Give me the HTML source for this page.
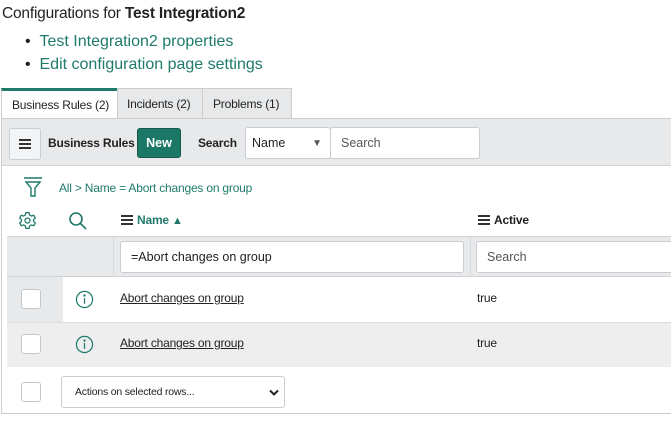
<!DOCTYPE html>
<html><head><style>
*{box-sizing:border-box;margin:0;padding:0}
body{width:671px;height:426px;overflow:hidden;background:#fff;font-family:"Liberation Sans",sans-serif;color:#222;position:relative}
.a{position:absolute;white-space:nowrap}
.t{color:#1f7a6b}
.s{font-size:12px;letter-spacing:-0.2px}
.inp{position:absolute;background:#fff;border:1px solid #c9cdd1;border-radius:3px;font-size:12.5px;padding-left:10px;display:flex;align-items:center}
.cb{position:absolute;width:20px;height:20px;border:1px solid #c4c7ca;border-radius:3px;background:#fff}
.ham{display:inline-block;width:12px;height:10px;border-top:2px solid #333;border-bottom:2px solid #333;position:relative;vertical-align:-1px;margin-right:4px}
.ham:after{content:"";position:absolute;left:0;right:0;top:2px;border-top:2px solid #333}
</style></head><body>
<div class="a" style="left:2px;top:5px;font-size:15.5px;letter-spacing:-0.2px">Configurations for <b style="font-weight:600">Test Integration2</b></div>
<div class="a" style="left:25px;top:33px;font-size:16px"><span style="color:#222">•</span>&nbsp;&nbsp;<span class="t">Test Integration2 properties</span></div>
<div class="a" style="left:25px;top:56px;font-size:16px"><span style="color:#222">•</span>&nbsp;&nbsp;<span class="t">Edit configuration page settings</span></div>

<div class="a s" style="left:1px;top:88px;width:116px;height:31px;background:#fff;border-top:3px solid #1f7a6b;border-left:1px solid #ccc;padding:7px 0 0 10px">Business Rules (2)</div>
<div class="a s" style="left:117px;top:88px;width:86px;height:30px;background:#e6e8ea;border:1px solid #ccc;border-bottom:none;padding:8px 0 0 9px">Incidents (2)</div>
<div class="a s" style="left:203px;top:88px;width:89px;height:30px;background:#e6e8ea;border:1px solid #ccc;border-bottom:none;border-left:none;padding:8px 0 0 10px">Problems (1)</div>

<div class="a" style="left:1px;top:118px;width:680px;height:296px;border:1px solid #ccc"></div>
<div class="a" style="left:2px;top:119px;width:680px;height:47px;background:#e7e9eb;border-bottom:1px solid #d0d3d6"></div>
<div class="a" style="left:9px;top:128px;width:32px;height:32px;background:#f3f4f5;border:1px solid #c9cdd1;border-radius:3px"><span class="ham" style="position:absolute;left:9px;top:10px;margin:0"></span></div>
<div class="a s" style="left:48px;top:136px;font-weight:600">Business Rules</div>
<div class="a" style="left:137px;top:128px;width:44px;height:30px;background:#1b7866;border:1px solid #11594b;border-radius:3px;color:#fff;font-size:12.5px;font-weight:bold;text-align:center;line-height:28px">New</div>
<div class="a s" style="left:198px;top:136px;font-weight:600">Search</div>
<div class="inp" style="left:245px;top:127px;width:86px;height:32px;padding-left:6px">Name<span style="position:absolute;right:8px;font-size:10px;color:#555">▼</span></div>
<div class="inp" style="left:330px;top:127px;width:150px;height:32px;color:#555">Search</div>

<svg class="a" style="left:22px;top:176px" width="22" height="24" viewBox="0 0 22 24" fill="none" stroke="#1f7a6b" stroke-width="1.4"><path d="M2 2h18M4 6h14l-5 6v8h-4v-8z"/></svg>
<div class="a t s" style="left:59px;top:181px">All &gt; Name = Abort changes on group</div>

<svg class="a" style="left:18px;top:211px" width="19" height="19" viewBox="0 0 24 24" fill="none" stroke="#1f7a6b" stroke-width="1.6"><circle cx="12" cy="12" r="3.2"/><path d="M10 2h4l.6 3 2.4 1.4 2.9-1 2 3.5-2.3 2v2.2l2.3 2-2 3.5-2.9-1L14.6 19 14 22h-4l-.6-3-2.4-1.4-2.9 1-2-3.5 2.3-2V10.9L2.1 8.9l2-3.5 2.9 1L9.4 5z"/></svg>
<svg class="a" style="left:68px;top:211px" width="20" height="20" viewBox="0 0 20 20" fill="none" stroke="#1f7a6b" stroke-width="1.6"><circle cx="8" cy="8" r="6"/><path d="M12.5 12.5L18 18"/></svg>
<div class="a t s" style="left:121px;top:213px;font-weight:600"><span class="ham"></span>Name <span style="font-size:11px">▲</span></div>
<div class="a s" style="left:478px;top:213px;font-weight:600"><span class="ham"></span>Active</div>

<div class="a" style="left:7px;top:236px;width:670px;height:41px;background:#e7e9eb;border-top:1px solid #d0d3d6;border-bottom:1px solid #d0d3d6"></div>
<div class="a" style="left:113px;top:236px;width:1px;height:41px;background:#d6d9dc"></div>
<div class="a" style="left:470px;top:236px;width:1px;height:41px;background:#d6d9dc"></div>
<div class="inp" style="left:120px;top:241px;width:344px;height:32px">=Abort changes on group</div>
<div class="inp" style="left:476px;top:241px;width:200px;height:32px;color:#555">Search</div>

<div class="a" style="left:7px;top:277px;width:56px;height:45px;background:#e7e9eb"></div>
<div class="a" style="left:7px;top:322px;width:670px;height:45px;background:#eeeeee;border-top:1px solid #ddd"></div>
<div class="cb" style="left:21px;top:289px"></div>
<div class="cb" style="left:21px;top:334px"></div>
<svg class="a" style="left:75px;top:290px" width="19" height="19" viewBox="0 0 20 20" fill="none" stroke="#1f7a6b" stroke-width="1.3"><circle cx="10" cy="10" r="8.5"/><path d="M10 8.5v6"/><circle cx="10" cy="5.8" r=".6" fill="#1f7a6b"/></svg>
<svg class="a" style="left:75px;top:335px" width="19" height="19" viewBox="0 0 20 20" fill="none" stroke="#1f7a6b" stroke-width="1.3"><circle cx="10" cy="10" r="8.5"/><path d="M10 8.5v6"/><circle cx="10" cy="5.8" r=".6" fill="#1f7a6b"/></svg>
<div class="a s" style="left:120px;top:291px;text-decoration:underline">Abort changes on group</div>
<div class="a s" style="left:120px;top:336px;text-decoration:underline">Abort changes on group</div>
<div class="a s" style="left:477px;top:291px">true</div>
<div class="a s" style="left:477px;top:336px">true</div>

<div class="cb" style="left:21px;top:382px"></div>
<div class="inp" style="left:61px;top:376px;width:224px;height:32px;font-size:10.5px;padding-left:13px;letter-spacing:-0.2px">Actions on selected rows...<svg style="position:absolute;right:5px;top:12px" width="10" height="8" viewBox="0 0 10 8"><path d="M1 1.5l4 4 4-4" stroke="#222" stroke-width="2" fill="none"/></svg></div>
</body></html>
